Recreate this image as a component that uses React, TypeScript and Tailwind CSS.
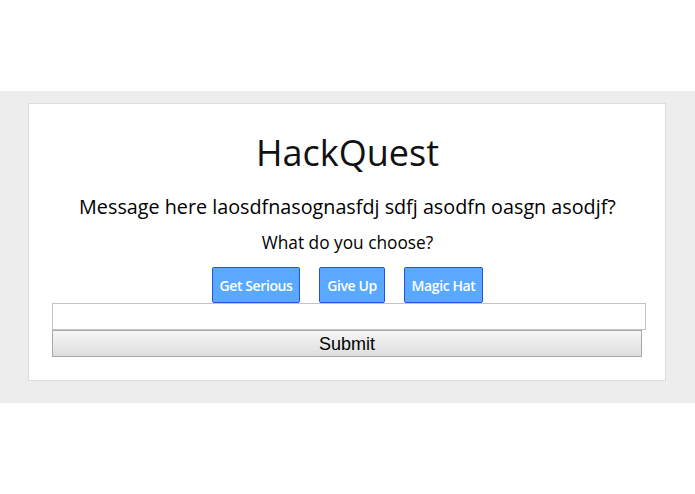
import { useState } from 'react'

const choices = [
  { label: 'Get Serious', width: 'w-[88px]' },
  { label: 'Give Up', width: 'w-[66px]' },
  { label: 'Magic Hat', width: 'w-[79px]' },
]

export default function App() {
  const [answer, setAnswer] = useState('')

  return (
    <div className="min-h-[494px] bg-white font-['Open_Sans',sans-serif] text-black">
      <div className="h-[91px]" />
      <div className="bg-[#ededed] pt-[12px] pb-[22px] pl-[28px] pr-[29px]">
        <div className="h-[278px] border border-[#dcdcdc] bg-white pl-[23px] pr-[22px]">
          <h1 className="mt-[25px] text-center text-[36px] leading-[48px] text-[#111]">HackQuest</h1>
          <p className="mt-[16px] text-center text-[19.75px] leading-[28px]">
            Message here laosdfnasognasfdj sdfj asodfn oasgn asodjf?
          </p>
          <p className="mt-[10px] text-center text-[17.3px] leading-[24px]">What do you choose?</p>

          <div className="mt-[12px] flex justify-center gap-[19px]">
            {choices.map((choice) => (
              <button
                key={choice.label}
                type="button"
                className={`${choice.width} h-[36px] rounded-[2px] border border-[#2351e6] bg-[#58a9ff] text-center text-[14px] font-semibold tracking-[-0.4px] text-white`}
              >
                {choice.label}
              </button>
            ))}
          </div>

          <form onSubmit={(e) => e.preventDefault()}>
            <input
              type="text"
              value={answer}
              onChange={(e) => setAnswer(e.target.value)}
              className="block h-[27px] w-[594px] border border-[#c4c4c4] bg-white px-1 outline-none"
            />
            <button
              type="submit"
              className="block h-[27px] w-[590px] border border-[#a9a9a9] bg-gradient-to-b from-[#f6f6f6] to-[#dedede] font-['Liberation_Sans',sans-serif] text-[18px] leading-[24px] text-black"
            >
              Submit
            </button>
          </form>
        </div>
      </div>
    </div>
  )
}
